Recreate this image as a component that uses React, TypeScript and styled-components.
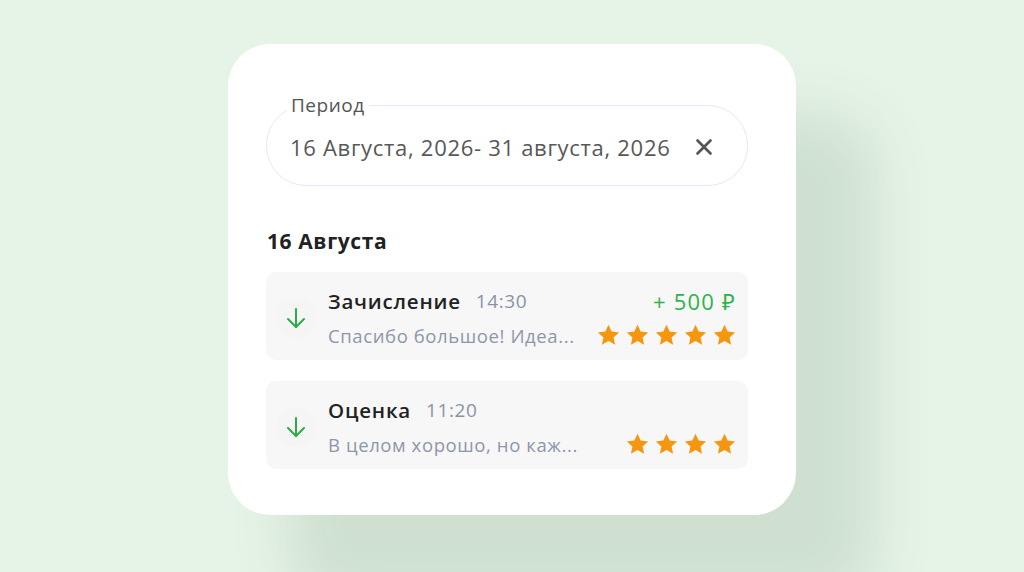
import React from "react";
import styled, { createGlobalStyle } from "styled-components";
import { X } from "lucide-react";

const GlobalStyle = createGlobalStyle`
  html, body {
    margin: 0;
    padding: 0;
    background: #e6f4e7;
    font-family: "Open Sans", "Noto Sans", sans-serif;
  }
  * { box-sizing: border-box; }
`;

const Page = styled.div`
  width: 1024px;
  height: 572px;
  overflow: hidden;
  display: flex;
  justify-content: center;
  padding-top: 44px;
`;

const Card = styled.div`
  width: 568px;
  height: 471px;
  background: #fff;
  border-radius: 42px;
  padding: 49px 48px 0 38px;
  box-shadow: 70px 80px 60px 10px rgba(40, 80, 50, 0.12);
`;

const Field = styled.fieldset`
  margin: 0;
  padding: 0 30px 8px 20px;
  border: 1px solid #e2e9f8;
  border-radius: 40px;
  min-width: 0;
`;

const Legend = styled.legend`
  padding: 0 4px;
  font-size: 19px;
  line-height: 24px;
  letter-spacing: 0.5px;
  color: #555;
`;

const FieldRow = styled.div`
  height: 60px;
  display: flex;
  align-items: center;
  justify-content: space-between;
  padding-left: 3px;
  color: #585858;
  font-size: 22px;
  letter-spacing: 0.7px;
`;

const Clear = styled.button`
  border: 0;
  background: none;
  padding: 0;
  display: flex;
  color: #555;
  cursor: pointer;
`;

const DayTitle = styled.h2`
  margin: 42px 0 18px 1px;
  font-size: 21px;
  line-height: 26px;
  font-weight: 700;
  letter-spacing: 0.6px;
  color: #222;
`;

const List = styled.div`
  display: flex;
  flex-direction: column;
  gap: 21px;
`;

const Row = styled.div`
  height: 88px;
  background: #f7f7f7;
  border-radius: 10px;
  padding: 16px 12px 12px 10px;
  display: grid;
  grid-template-columns: 40px 1fr auto;
  grid-template-rows: 26px 26px;
  column-gap: 12px;
  row-gap: 8px;
`;

const IconWrap = styled.div`
  grid-row: 1 / span 2;
  align-self: center;
  width: 40px;
  height: 40px;
  border-radius: 50%;
  background: #f4f5f4;
  display: flex;
  align-items: center;
  justify-content: center;
  color: #2eaa48;
`;

const TitleLine = styled.div`
  display: flex;
  align-items: center;
  gap: 15px;
`;

const Title = styled.span`
  font-size: 20.5px;
  font-weight: 600;
  letter-spacing: 0.8px;
  color: #222;
`;

const Time = styled.span`
  font-size: 19px;
  letter-spacing: 0.6px;
  color: #8a93a6;
`;

const Amount = styled.div`
  justify-self: end;
  align-self: center;
  font-size: 22px;
  letter-spacing: 1.2px;
  color: #2db34a;
`;

const Comment = styled.div`
  grid-column: 2;
  font-size: 18.5px;
  letter-spacing: 0.6px;
  color: #8e96aa;
  align-self: center;
  white-space: nowrap;
`;

const Stars = styled.div`
  grid-column: 3;
  justify-self: end;
  align-self: center;
  display: flex;
  gap: 6px;
`;

const Star = () => (
  <svg width="23" height="22" viewBox="0 0 24 23">
    <path
      d="M12 0.8l3.3 7.1 7.8 0.9-5.8 5.3 1.6 7.7L12 17.9l-6.9 3.9 1.6-7.7L0.9 8.8l7.8-0.9z"
      fill="#f5960f"
    />
  </svg>
);

const IncomeArrow = () => (
  <svg width="20" height="22" viewBox="0 0 20 22" fill="none" stroke="currentColor" strokeWidth="2" strokeLinecap="round" strokeLinejoin="round">
    <path d="M10 2v18" />
    <path d="M2 12l8 8 8-8" />
  </svg>
);

type Entry = {
  title: string;
  time: string;
  comment: string;
  amount?: string;
  stars: number;
};

const entries: Entry[] = [
  { title: "Зачисление", time: "14:30", comment: "Спасибо большое! Идеа...", amount: "+ 500 ₽", stars: 5 },
  { title: "Оценка", time: "11:20", comment: "В целом хорошо, но каж...", stars: 4 },
];

const App: React.FC = () => (
  <Page>
    <GlobalStyle />
    <Card>
      <Field>
        <Legend>Период</Legend>
        <FieldRow>
          <span>16 Августа, 2026- 31 августа, 2026</span>
          <Clear aria-label="Очистить">
            <X size={26} strokeWidth={2.4} />
          </Clear>
        </FieldRow>
      </Field>
      <DayTitle>16 Августа</DayTitle>
      <List>
        {entries.map((e) => (
          <Row key={e.title}>
            <IconWrap>
              <IncomeArrow />
            </IconWrap>
            <TitleLine>
              <Title>{e.title}</Title>
              <Time>{e.time}</Time>
            </TitleLine>
            <Amount>{e.amount}</Amount>
            <Comment>{e.comment}</Comment>
            <Stars>
              {Array.from({ length: e.stars }).map((_, i) => (
                <Star key={i} />
              ))}
            </Stars>
          </Row>
        ))}
      </List>
    </Card>
  </Page>
);

export default App;
